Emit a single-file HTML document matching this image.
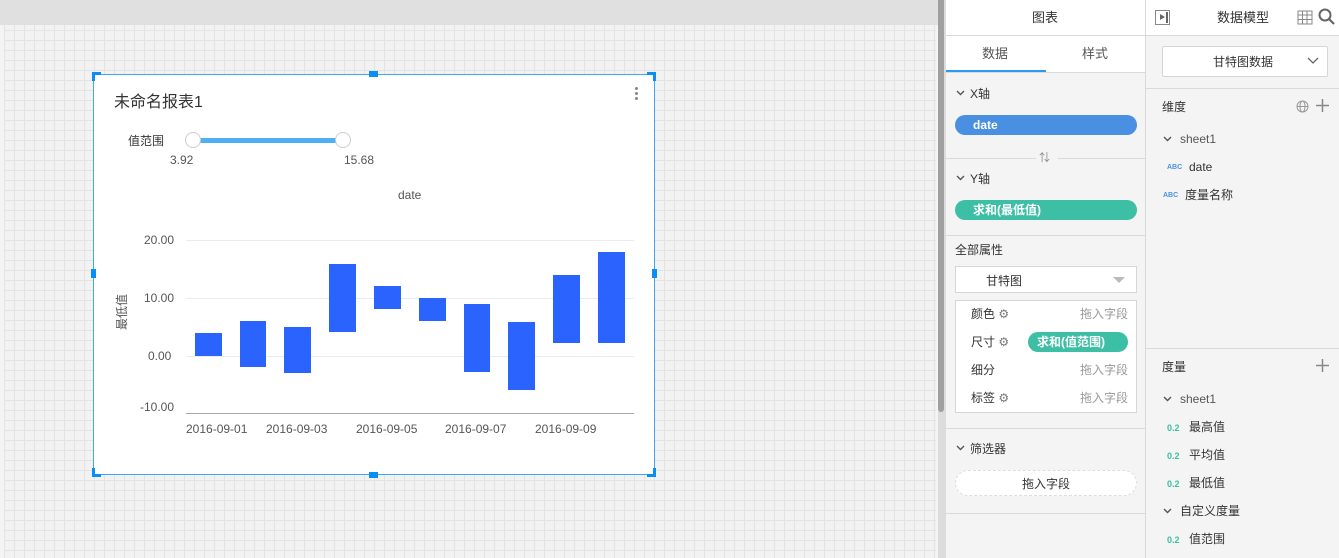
<!DOCTYPE html>
<html><head><meta charset="utf-8"><style>
*{margin:0;padding:0;box-sizing:border-box}
body{width:1339px;height:558px;overflow:hidden;position:relative;background:#f4f4f4;font-family:"Liberation Sans","Noto Sans CJK SC",sans-serif;font-size:12px;color:#333}
.a{position:absolute}
.t{position:absolute;white-space:nowrap;line-height:14px}
.grid{left:4px;top:25px;width:932px;height:533px;background-color:#f2f2f2;background-image:linear-gradient(#e3e3e3 1px,transparent 1px),linear-gradient(90deg,#e3e3e3 1px,transparent 1px);background-size:10px 10px;background-position:0 5px}
.hl{position:absolute;height:1px;background:#d9d9d9}
.pill{position:absolute;border-radius:10px;color:#fff;font-weight:bold;font-size:12px;height:20px;line-height:20px;padding-left:18px}
.h{position:absolute;background:#0a8ef5}
.bar{position:absolute;background:#2b63ff}
.g{color:#999}
.n{color:#3cbfa4;font-size:9px;font-weight:bold}
.abc{color:#4a90e2;font-size:7px;font-weight:bold}
.cv{position:absolute}
</style></head><body>
<div class="a" style="left:0;top:0;width:938px;height:25px;background:#e0e0e0"></div>
<div class="a grid"></div>
<div class="a" style="left:938px;top:0;width:8px;height:558px;background:#dcdcdc"></div>
<div class="a" style="left:938px;top:0;width:6px;height:412px;background:#a0a0a0;border-radius:0 0 3px 3px"></div>

<!-- card -->
<div class="a" style="left:93px;top:74px;width:562px;height:401px;background:#fff;border:1px solid #3da6f5"></div>
<div class="h" style="left:92px;top:72px;width:9px;height:3px"></div><div class="h" style="left:92px;top:72px;width:3px;height:9px"></div>
<div class="h" style="left:647px;top:72px;width:9px;height:3px"></div><div class="h" style="left:653px;top:72px;width:3px;height:9px"></div>
<div class="h" style="left:92px;top:474px;width:9px;height:3px"></div><div class="h" style="left:92px;top:468px;width:3px;height:9px"></div>
<div class="h" style="left:647px;top:474px;width:9px;height:3px"></div><div class="h" style="left:653px;top:468px;width:3px;height:9px"></div>
<div class="h" style="left:369px;top:71px;width:9px;height:6px"></div>
<div class="h" style="left:369px;top:472px;width:9px;height:6px"></div>
<div class="h" style="left:91px;top:269px;width:5px;height:9px"></div>
<div class="h" style="left:652px;top:269px;width:5px;height:9px"></div>
<div class="t" style="left:114px;top:94px;font-size:16px;line-height:18px;color:#333">未命名报表1</div>
<div class="a" style="left:635px;top:87px;width:3px;height:3px;border-radius:50%;background:#888"></div>
<div class="a" style="left:635px;top:92px;width:3px;height:3px;border-radius:50%;background:#888"></div>
<div class="a" style="left:635px;top:97px;width:3px;height:3px;border-radius:50%;background:#888"></div>
<div class="t" style="left:128px;top:134px">值范围</div>
<div class="a" style="left:193px;top:138px;width:150px;height:5px;background:#4db0f5"></div>
<div class="a" style="left:185px;top:132px;width:16px;height:16px;border-radius:50%;background:#fff;border:1px solid #ccc"></div>
<div class="a" style="left:335px;top:132px;width:16px;height:16px;border-radius:50%;background:#fff;border:1px solid #ccc"></div>
<div class="t" style="left:170px;top:153px;color:#555">3.92</div>
<div class="t" style="left:344px;top:153px;color:#555">15.68</div>
<div class="t" style="left:398px;top:188px;color:#555">date</div>
<div class="hl" style="left:186px;top:240px;width:448px;background:#ebebeb"></div>
<div class="hl" style="left:186px;top:298px;width:448px;background:#ebebeb"></div>
<div class="hl" style="left:186px;top:356px;width:448px;background:#ebebeb"></div>
<div class="hl" style="left:186px;top:413px;width:448px;background:#aaa"></div>
<div class="t" style="left:144px;top:233px;color:#555">20.00</div>
<div class="t" style="left:144px;top:291px;color:#555">10.00</div>
<div class="t" style="left:148px;top:349px;color:#555">0.00</div>
<div class="t" style="left:140px;top:400px;color:#555">-10.00</div>
<div class="t" style="left:104px;top:305px;color:#555;transform:rotate(-90deg)">最低值</div>
<div class="bar" style="left:195px;top:333px;width:27px;height:23px"></div>
<div class="bar" style="left:240px;top:321px;width:26px;height:46px"></div>
<div class="bar" style="left:284px;top:327px;width:27px;height:46px"></div>
<div class="bar" style="left:329px;top:264px;width:27px;height:68px"></div>
<div class="bar" style="left:374px;top:286px;width:27px;height:23px"></div>
<div class="bar" style="left:419px;top:298px;width:27px;height:23px"></div>
<div class="bar" style="left:464px;top:304px;width:26px;height:68px"></div>
<div class="bar" style="left:508px;top:322px;width:27px;height:68px"></div>
<div class="bar" style="left:553px;top:275px;width:27px;height:68px"></div>
<div class="bar" style="left:598px;top:252px;width:27px;height:91px"></div>
<div class="t" style="left:186px;top:422px;color:#555">2016-09-01</div>
<div class="t" style="left:266px;top:422px;color:#555">2016-09-03</div>
<div class="t" style="left:356px;top:422px;color:#555">2016-09-05</div>
<div class="t" style="left:445px;top:422px;color:#555">2016-09-07</div>
<div class="t" style="left:535px;top:422px;color:#555">2016-09-09</div>

<!-- left panel -->
<div class="a" style="left:946px;top:0;width:200px;height:72px;background:#fff"></div>
<div class="a" style="left:1145px;top:0;width:1px;height:558px;background:#d9d9d9"></div>
<div class="hl" style="left:946px;top:35px;width:393px"></div>
<div class="t" style="left:1032px;top:11px;font-size:13px">图表</div>
<div class="t" style="left:982px;top:47px;font-size:13px;color:#555">数据</div>
<div class="t" style="left:1082px;top:47px;font-size:13px;color:#555">样式</div>
<div class="a" style="left:946px;top:70px;width:100px;height:2px;background:#2b9af3"></div>
<div class="hl" style="left:946px;top:72px;width:199px"></div>
<svg class="cv" style="left:956px;top:90px" width="9" height="6"><path d="M1 1l3.5 3.5L8 1" fill="none" stroke="#555" stroke-width="1.4"/></svg><div class="t" style="left:970px;top:87px">X轴</div>
<div class="pill" style="left:955px;top:115px;width:182px;background:#4a90e2">date</div>
<div class="hl" style="left:946px;top:158px;width:90px"></div><div class="hl" style="left:1058px;top:158px;width:87px"></div>
<div class="t" style="left:1039px;top:151px;color:#888;font-size:11px">⇅</div>
<svg class="cv" style="left:956px;top:175px" width="9" height="6"><path d="M1 1l3.5 3.5L8 1" fill="none" stroke="#555" stroke-width="1.4"/></svg><div class="t" style="left:970px;top:172px">Y轴</div>
<div class="pill" style="left:955px;top:200px;width:182px;background:#3dbfa5">求和(最低值)</div>
<div class="hl" style="left:946px;top:235px;width:199px"></div>
<div class="t" style="left:955px;top:243px">全部属性</div>
<div class="a" style="left:955px;top:266px;width:182px;height:27px;background:#fff;border:1px solid #d6d6d6"></div>
<div class="t" style="left:986px;top:274px">甘特图</div>
<div class="a" style="left:1113px;top:277px;width:0;height:0;border-left:6px solid transparent;border-right:6px solid transparent;border-top:6px solid #bbb"></div>
<div class="a" style="left:955px;top:300px;width:182px;height:113px;background:#fff;border:1px solid #d6d6d6"></div>
<div class="t" style="left:971px;top:307px">颜色 <span style="color:#777">⚙</span></div><div class="t g" style="left:1080px;top:307px">拖入字段</div>
<div class="t" style="left:971px;top:335px">尺寸 <span style="color:#777">⚙</span></div>
<div class="pill" style="left:1028px;top:332px;width:100px;background:#3dbfa5;padding-left:9px">求和(值范围)</div>
<div class="t" style="left:971px;top:363px">细分</div><div class="t g" style="left:1080px;top:363px">拖入字段</div>
<div class="t" style="left:971px;top:391px">标签 <span style="color:#777">⚙</span></div><div class="t g" style="left:1080px;top:391px">拖入字段</div>
<div class="hl" style="left:946px;top:428px;width:199px"></div>
<svg class="cv" style="left:956px;top:445px" width="9" height="6"><path d="M1 1l3.5 3.5L8 1" fill="none" stroke="#555" stroke-width="1.4"/></svg><div class="t" style="left:970px;top:442px">筛选器</div>
<div class="a" style="left:955px;top:470px;width:182px;height:26px;background:#fff;border:1px dashed #ddd;border-radius:13px"></div>
<div class="t" style="left:1022px;top:477px">拖入字段</div>
<div class="hl" style="left:946px;top:513px;width:199px"></div>

<!-- right panel -->
<div class="a" style="left:1146px;top:0;width:193px;height:35px;background:#fff"></div>
<div class="a" style="left:1155px;top:10px;width:15px;height:15px;border:1px solid #888"></div>
<div class="a" style="left:1160px;top:14px;width:0;height:0;border-top:3px solid transparent;border-bottom:3px solid transparent;border-left:5px solid #666"></div>
<div class="a" style="left:1166px;top:12px;width:2px;height:11px;background:#666"></div>
<div class="t" style="left:1217px;top:11px;font-size:13px">数据模型</div>
<svg class="a" style="left:1297px;top:10px" width="16" height="15"><rect x="1" y="1" width="14" height="13" fill="none" stroke="#888"/><path d="M1 5h14M1 9.5h14M5.5 1v13M10 1v13" stroke="#888"/></svg>
<svg class="a" style="left:1318px;top:8px" width="18" height="18"><circle cx="7" cy="7" r="5.5" fill="none" stroke="#666" stroke-width="2"/><path d="M11 11l5 5" stroke="#666" stroke-width="2.2"/></svg>
<div class="a" style="left:1162px;top:46px;width:166px;height:31px;background:#fff;border:1px solid #d6d6d6;border-radius:2px"></div>
<div class="t" style="left:1213px;top:55px">甘特图数据</div>
<svg class="a" style="left:1307px;top:57px" width="12" height="8"><path d="M1 1l5 5 5-5" fill="none" stroke="#666" stroke-width="1.3"/></svg>
<div class="hl" style="left:1146px;top:88px;width:193px"></div>
<div class="t" style="left:1162px;top:100px">维度</div>
<svg class="a" style="left:1296px;top:100px" width="13" height="13"><circle cx="6.5" cy="6.5" r="5.5" fill="none" stroke="#999"/><ellipse cx="6.5" cy="6.5" rx="2.5" ry="5.5" fill="none" stroke="#999"/><path d="M1 6.5h11" stroke="#999"/></svg>
<svg class="a" style="left:1316px;top:99px" width="13" height="13"><path d="M6.5 0v13M0 6.5h13" stroke="#888" stroke-width="1.5"/></svg>
<svg class="cv" style="left:1163px;top:136px" width="9" height="6"><path d="M1 1l3.5 3.5L8 1" fill="none" stroke="#555" stroke-width="1.4"/></svg><div class="t" style="left:1180px;top:132px;color:#555">sheet1</div>
<div class="t abc" style="left:1167px;top:161px">ABC</div><div class="t" style="left:1189px;top:160px">date</div>
<div class="t abc" style="left:1163px;top:189px">ABC</div><div class="t" style="left:1185px;top:188px">度量名称</div>
<div class="hl" style="left:1146px;top:348px;width:193px"></div>
<div class="t" style="left:1162px;top:360px">度量</div>
<svg class="a" style="left:1316px;top:359px" width="13" height="13"><path d="M6.5 0v13M0 6.5h13" stroke="#888" stroke-width="1.5"/></svg>
<svg class="cv" style="left:1163px;top:396px" width="9" height="6"><path d="M1 1l3.5 3.5L8 1" fill="none" stroke="#555" stroke-width="1.4"/></svg><div class="t" style="left:1180px;top:392px;color:#555">sheet1</div>
<div class="t n" style="left:1167px;top:421px">0.2</div><div class="t" style="left:1189px;top:420px">最高值</div>
<div class="t n" style="left:1167px;top:449px">0.2</div><div class="t" style="left:1189px;top:448px">平均值</div>
<div class="t n" style="left:1167px;top:477px">0.2</div><div class="t" style="left:1189px;top:476px">最低值</div>
<svg class="cv" style="left:1163px;top:508px" width="9" height="6"><path d="M1 1l3.5 3.5L8 1" fill="none" stroke="#555" stroke-width="1.4"/></svg><div class="t" style="left:1180px;top:504px">自定义度量</div>
<div class="t n" style="left:1167px;top:533px">0.2</div><div class="t" style="left:1189px;top:532px">值范围</div>
</body></html>
